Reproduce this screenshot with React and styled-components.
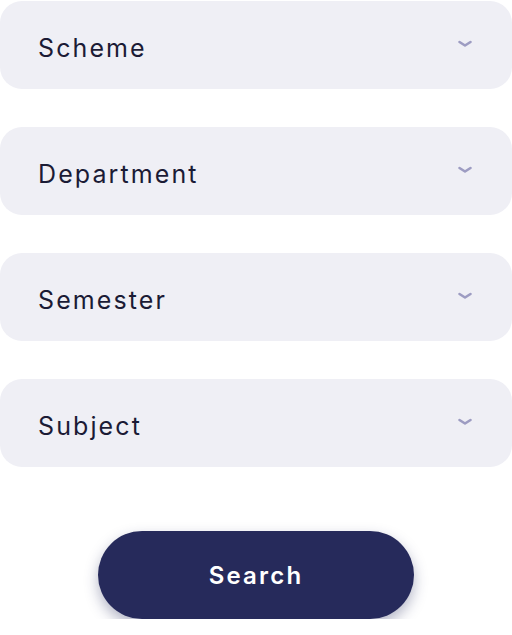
import React from 'react';
import styled, { createGlobalStyle } from 'styled-components';

const Global = createGlobalStyle`
  html, body { margin: 0; padding: 0; background: #ffffff; }
  body { font-family: "Inter", "Open Sans", sans-serif; }
`;

const Form = styled.div`
  width: 512px;
  display: flex;
  flex-direction: column;
  gap: 38px;
  padding-top: 1px;
`;

const Select = styled.div`
  height: 88px;
  border-radius: 22px;
  background: #efeff5;
  display: flex;
  align-items: center;
  justify-content: space-between;
  padding: 0 39px 0 38px;
  box-sizing: border-box;
  cursor: pointer;
`;

const Label = styled.span`
  font-size: 25px;
  font-weight: 400;
  letter-spacing: 2.1px;
  color: #1b1b35;
  margin-top: 6px;
`;

const Chevron = styled.svg`
  width: 16px;
  height: 8px;
  margin-top: -2px;
`;

const Actions = styled.div`
  display: flex;
  justify-content: center;
  padding-top: 26px;
`;

const SearchButton = styled.button`
  width: 316px;
  height: 88px;
  border: none;
  border-radius: 44px;
  background: #262a5b;
  color: #ffffff;
  font-family: "Inter", "Open Sans", sans-serif;
  font-size: 24px;
  font-weight: 600;
  letter-spacing: 2.2px;
  box-shadow: 0 6px 14px rgba(38, 42, 91, 0.35);
  cursor: pointer;
`;

const fields = ['Scheme', 'Department', 'Semester', 'Subject'];

export default function App() {
  return (
    <>
      <Global />
      <Form>
        {fields.map(f => (
          <Select key={f}>
            <Label>{f}</Label>
            <Chevron viewBox="0 0 16 8">
              <path d="M2.5 2 L8 5.5 L13.5 2" fill="none" stroke="#9d9cc2" strokeWidth="2.6" strokeLinecap="round" strokeLinejoin="round" />
            </Chevron>
          </Select>
        ))}
        <Actions>
          <SearchButton>Search</SearchButton>
        </Actions>
      </Form>
    </>
  );
}
